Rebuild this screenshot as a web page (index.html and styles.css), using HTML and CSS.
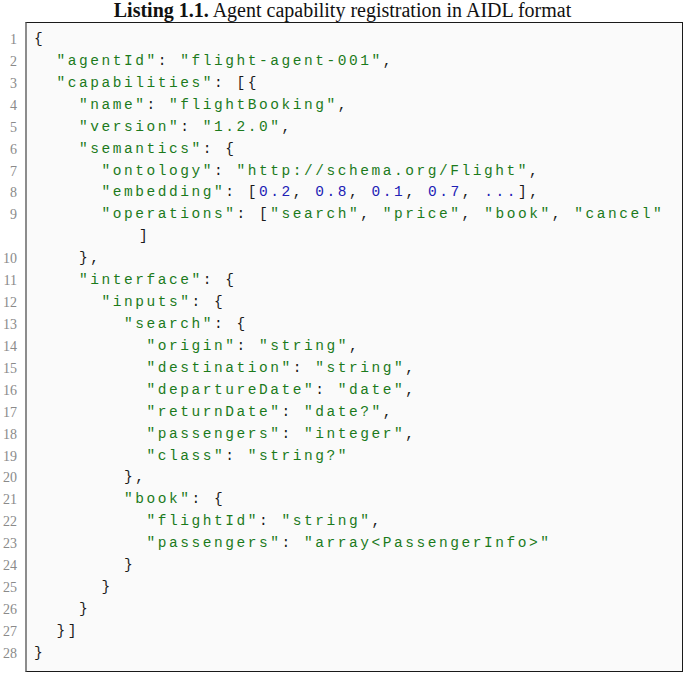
FILE: index.html
```html
<!DOCTYPE html>
<html>
<head>
<meta charset="utf-8">
<link rel="stylesheet" href="styles.css">
</head>
<body>
<div class="caption"><b>Listing 1.1.</b> Agent capability registration in AIDL format</div>
<div class="listing">
  <div class="nums">
    <div>1</div><div>2</div><div>3</div><div>4</div><div>5</div><div>6</div><div>7</div><div>8</div><div>9</div><div>&nbsp;</div>
    <div>10</div><div>11</div><div>12</div><div>13</div><div>14</div><div>15</div><div>16</div><div>17</div><div>18</div><div>19</div>
    <div>20</div><div>21</div><div>22</div><div>23</div><div>24</div><div>25</div><div>26</div><div>27</div><div>28</div>
  </div>
  <div class="code">
<div class="ln">{</div>
<div class="ln">  <span class="s">"agentId"</span>: <span class="s">"flight-agent-001"</span>,</div>
<div class="ln">  <span class="s">"capabilities"</span>: [{</div>
<div class="ln">    <span class="s">"name"</span>: <span class="s">"flightBooking"</span>,</div>
<div class="ln">    <span class="s">"version"</span>: <span class="s">"1.2.0"</span>,</div>
<div class="ln">    <span class="s">"semantics"</span>: {</div>
<div class="ln">      <span class="s">"ontology"</span>: <span class="s">"http://schema.org/Flight"</span>,</div>
<div class="ln">      <span class="s">"embedding"</span>: [<span class="n">0.2</span>, <span class="n">0.8</span>, <span class="n">0.1</span>, <span class="n">0.7</span>, <span class="n">...</span>],</div>
<div class="ln">      <span class="s">"operations"</span>: [<span class="s">"search"</span>, <span class="s">"price"</span>, <span class="s">"book"</span>, <span class="s">"cancel"</span></div>
<div class="ln wrap">]</div>
<div class="ln">    },</div>
<div class="ln">    <span class="s">"interface"</span>: {</div>
<div class="ln">      <span class="s">"inputs"</span>: {</div>
<div class="ln">        <span class="s">"search"</span>: {</div>
<div class="ln">          <span class="s">"origin"</span>: <span class="s">"string"</span>,</div>
<div class="ln">          <span class="s">"destination"</span>: <span class="s">"string"</span>,</div>
<div class="ln">          <span class="s">"departureDate"</span>: <span class="s">"date"</span>,</div>
<div class="ln">          <span class="s">"returnDate"</span>: <span class="s">"date?"</span>,</div>
<div class="ln">          <span class="s">"passengers"</span>: <span class="s">"integer"</span>,</div>
<div class="ln">          <span class="s">"class"</span>: <span class="s">"string?"</span></div>
<div class="ln">        },</div>
<div class="ln">        <span class="s">"book"</span>: {</div>
<div class="ln">          <span class="s">"flightId"</span>: <span class="s">"string"</span>,</div>
<div class="ln">          <span class="s">"passengers"</span>: <span class="s">"array&lt;PassengerInfo&gt;"</span></div>
<div class="ln">        }</div>
<div class="ln">      }</div>
<div class="ln">    }</div>
<div class="ln">  }]</div>
<div class="ln">}</div>
  </div>
</div>
</body>
</html>
```
FILE: styles.css
```css
html, body {
  margin: 0;
  padding: 0;
  background: #ffffff;
}
body {
  width: 685px;
  height: 673px;
  overflow: hidden;
}
.caption {
  font-family: "Liberation Serif", serif;
  font-size: 20px;
  line-height: 20px;
  text-align: center;
  color: #111;
  padding-top: 0;
  height: 22px;
}
.caption b {
  font-weight: bold;
}
.listing {
  display: flex;
  align-items: flex-start;
}
.nums {
  width: 17px;
  padding-top: 7px;
  margin-right: 8px;
  font-family: "Liberation Serif", serif;
  font-size: 14px;
  color: #8a8a8a;
  text-align: right;
}
.nums div {
  height: 21.93px;
  line-height: 21.93px;
}
.code {
  flex: 1;
  margin-right: 2px;
  background: #fafafa;
  border: 1px solid #1a1a1a;
  border-left: 2px solid #8c8c8c;
  border-right-width: 1.5px;
  padding: 6px 0 6px 7px;
  font-family: "Liberation Mono", monospace;
  font-size: 14.5px;
  letter-spacing: 2.55px;
  color: #1a1a1a;
  height: 636px;
}
.ln {
  height: 21.93px;
  line-height: 21.93px;
  white-space: pre;
}
.wrap {
  padding-left: 105px;
}
.s {
  color: #1c7a1c;
}
.n {
  color: #2121b5;
}
```
